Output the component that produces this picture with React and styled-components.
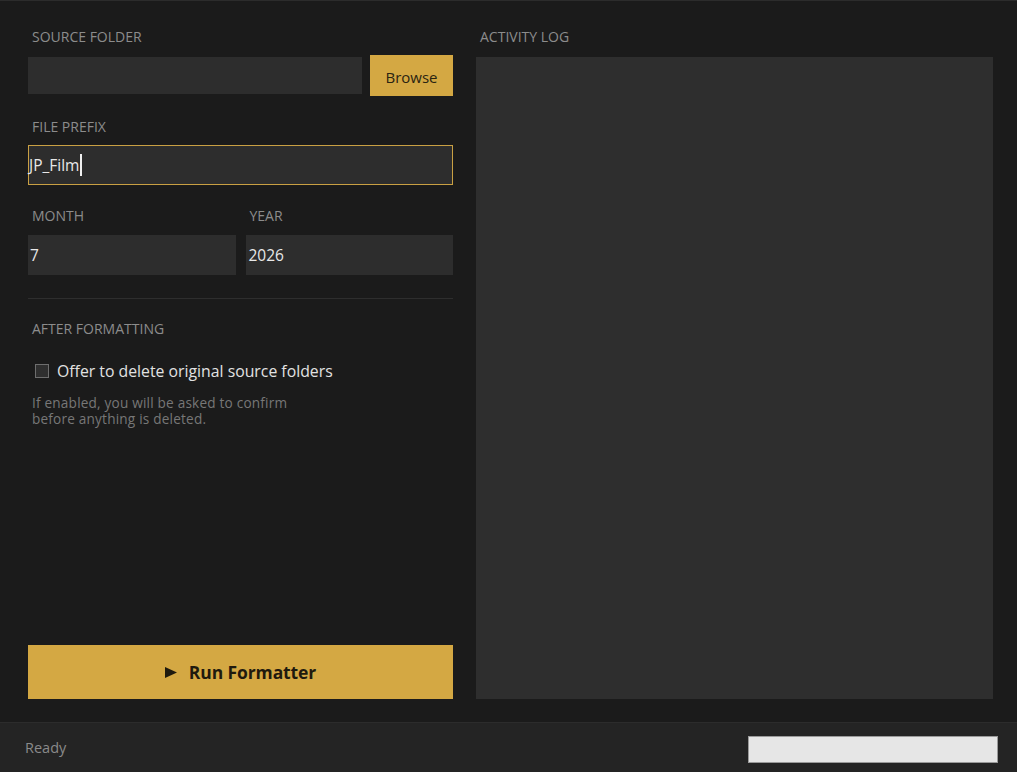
import React from "react";
import styled, { createGlobalStyle } from "styled-components";

const Global = createGlobalStyle`
  html, body { margin: 0; padding: 0; background: #1b1b1b; }
  body { font-family: "Open Sans", "Noto Sans", sans-serif; }
  * { box-sizing: border-box; }
`;

const Window = styled.div`
  height: 772px;
  display: flex;
  flex-direction: column;
  background: #1b1b1b;
  border-top: 1px solid #2c2c2c;
`;

const Main = styled.div`
  flex: 1;
  display: flex;
  gap: 23px;
  padding: 27px 24px 23px 28px;
  min-height: 0;
`;

const LeftPanel = styled.div`
  width: 425px;
  display: flex;
  flex-direction: column;
`;

const RightPanel = styled.div`
  flex: 1;
  display: flex;
  flex-direction: column;
`;

const Label = styled.div`
  font-size: 14px;
  line-height: 18px;
  color: #8c8c8c;
  padding-left: 4px;
  margin-top: ${(p) => p.$mt ?? 0}px;
  margin-bottom: ${(p) => p.$mb ?? 9}px;
`;

const Row = styled.div`
  display: flex;
  align-items: ${(p) => p.$align ?? "center"};
  gap: ${(p) => p.$gap ?? 8}px;
`;

const Field = styled.div`
  flex: ${(p) => (p.$grow ? 1 : "none")};
  height: ${(p) => p.$h ?? 40}px;
  background: #2d2d2d;
  border: 1px solid ${(p) => (p.$focused ? "#c9a043" : "#2d2d2d")};
  color: #e8e8e8;
  font-size: 15.5px;
  display: flex;
  align-items: center;
  padding-left: ${(p) => p.$pl ?? 2}px;
`;

const Caret = styled.span`
  display: inline-block;
  width: 2px;
  height: 22px;
  background: #f0f0f0;
  margin-left: 1px;
`;

const Column = styled.div`
  flex: 1;
  display: flex;
  flex-direction: column;
`;

const BrowseButton = styled.button`
  width: 83px;
  height: 41px;
  background: #d4a843;
  border: none;
  color: #2a2412;
  font-family: inherit;
  font-size: 15px;
  padding: 2px 0 0;
`;

const Separator = styled.div`
  height: 1px;
  background: #2e2e2e;
  margin-top: 23px;
`;

const CheckRow = styled.label`
  display: flex;
  align-items: center;
  gap: 8px;
  margin-top: 23px;
  padding-left: 7px;
  font-size: 15.8px;
  line-height: 20px;
  color: #e2e2e2;
`;

const Box = styled.span`
  width: 14px;
  height: 14px;
  background: #2f2f2f;
  border: 1px solid #6e6e6e;
`;

const Help = styled.p`
  margin: 14px 0 0;
  padding-left: 4px;
  font-size: 13.6px;
  line-height: 16px;
  color: #777777;
  letter-spacing: 0.2px;
`;

const RunButton = styled.button`
  margin-top: auto;
  height: 54px;
  background: #d4a843;
  border: none;
  color: #1f1a0e;
  font-family: inherit;
  font-weight: 700;
  font-size: 17.5px;
  display: flex;
  align-items: center;
  justify-content: center;
  gap: 12px;
  letter-spacing: -0.1px;
`;

const StatusBar = styled.div`
  height: 50px;
  background: #242424;
  border-top: 1px solid #2c2c2c;
  display: flex;
  align-items: center;
  justify-content: space-between;
  padding: 0 19px 0 25px;
`;

const StatusText = styled.span`
  font-size: 14.5px;
  color: #8a8a8a;
`;

const Progress = styled.div`
  width: 250px;
  height: 27px;
  background: #e6e6e6;
  border: 1px solid #9a9a9a;
  margin-top: 3px;
`;

const LogBox = styled.div`
  flex: 1;
  background: #2e2e2e;
`;

const PlayIcon = () => (
  <svg width="12" height="11" viewBox="0 0 12 11" aria-hidden="true">
    <path d="M0 0 L12 5.5 L0 11 Z" fill="#1f1a0e" />
  </svg>
);

export default function App() {
  return (
    <>
      <Global />
      <Window>
        <Main>
          <LeftPanel>
            <Label>SOURCE FOLDER</Label>
            <Row>
              <Field $grow $h={37} />
              <BrowseButton>Browse</BrowseButton>
            </Row>

            <Label $mt={22}>FILE PREFIX</Label>
            <Field $focused $pl={0}>
              JP_Film
              <Caret />
            </Field>

            <Row $gap={10} $align="stretch">
              <Column>
                <Label $mt={22} $mb={10}>MONTH</Label>
                <Field $pl={1}>7</Field>
              </Column>
              <Column>
                <Label $mt={22} $mb={10}>YEAR</Label>
                <Field $pl={2}>2026</Field>
              </Column>
            </Row>

            <Separator />

            <Label $mt={21} $mb={0}>AFTER FORMATTING</Label>
            <CheckRow>
              <Box />
              Offer to delete original source folders
            </CheckRow>
            <Help>
              If enabled, you will be asked to confirm
              <br />
              before anything is deleted.
            </Help>

            <RunButton>
              <PlayIcon />
              Run Formatter
            </RunButton>
          </LeftPanel>

          <RightPanel>
            <Label $mb={11}>ACTIVITY LOG</Label>
            <LogBox />
          </RightPanel>
        </Main>
        <StatusBar>
          <StatusText>Ready</StatusText>
          <Progress />
        </StatusBar>
      </Window>
    </>
  );
}
